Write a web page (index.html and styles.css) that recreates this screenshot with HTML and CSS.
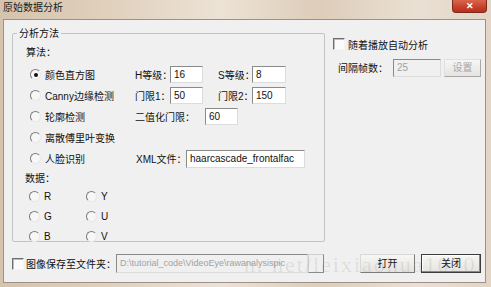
FILE: index.html
```html
<!DOCTYPE html>
<html lang="zh-CN">
<head>
    <meta charset="UTF-8">
    <title>原始数据分析</title>
    <link rel="stylesheet" href="styles.css">
</head>
<body>
    <div class="window">
        <div class="titlebar">
            <span class="title">原始数据分析</span>
            <span class="close-btn">✕</span>
        </div>

        <div class="client">
            <div class="top">
                <div class="group">
                    <div class="legend">分析方法</div>
                    <div class="group-body">
                        <div class="section-label">算法：</div>
                        <div class="algo-grid">
                            <div class="radio-row"><span class="radio checked"></span>颜色直方图</div>
                            <div class="param-row">
                                <span class="lbl w35">H等级：</span><span class="input w33">16</span>
                                <span class="lbl w34 gap15">S等级：</span><span class="input w34">8</span>
                            </div>

                            <div class="radio-row"><span class="radio"></span>Canny边缘检测</div>
                            <div class="param-row">
                                <span class="lbl w35">门限1：</span><span class="input w33">50</span>
                                <span class="lbl w34 gap15">门限2：</span><span class="input w34">150</span>
                            </div>

                            <div class="radio-row"><span class="radio"></span>轮廓检测</div>
                            <div class="param-row">
                                <span class="lbl w70">二值化门限：</span><span class="input w33">60</span>
                            </div>

                            <div class="radio-row"><span class="radio"></span>离散傅里叶变换</div>
                            <div class="param-row"></div>

                            <div class="radio-row"><span class="radio"></span>人脸识别</div>
                            <div class="param-row xml">
                                <span class="lbl w50">XML文件：</span><span class="input w119">haarcascade_frontalfac</span>
                            </div>
                        </div>

                        <div class="section-label data-label">数据：</div>
                        <div class="data-grid">
                            <div class="radio-row small"><span class="radio"></span>R</div>
                            <div class="radio-row small"><span class="radio"></span>Y</div>
                            <div class="radio-row small"><span class="radio"></span>G</div>
                            <div class="radio-row small"><span class="radio"></span>U</div>
                            <div class="radio-row small"><span class="radio"></span>B</div>
                            <div class="radio-row small"><span class="radio"></span>V</div>
                        </div>
                    </div>
                </div>

                <div class="side">
                    <div class="check-row"><span class="checkbox"></span>随着播放自动分析</div>
                    <div class="interval-row">
                        <span class="lbl w55">间隔帧数：</span>
                        <span class="input disabled w48">25</span>
                        <span class="button disabled w37">设置</span>
                    </div>
                </div>
            </div>

            <div class="bottom">
                <span class="checkbox"></span>
                <span class="lbl save-lbl">图像保存至文件夹：</span>
                <span class="input disabled path">D:\tutorial_code\VideoEye\rawanalysispic</span>
                <span class="browse"></span>
                <span class="button open">打开</span>
                <span class="button default close">关闭</span>
            </div>
        </div>

        <div class="watermark">n. net/leixiaohua1020</div>
    </div>
</body>
</html>
```

FILE: styles.css
```css
* {
    margin: 0;
    padding: 0;
    box-sizing: border-box;
}

body {
    width: 491px;
    height: 287px;
    overflow: hidden;
    font-family: "Liberation Sans", "Noto Sans CJK SC", sans-serif;
    font-size: 10px;
    color: #111;
    background: #e3d5c3;
}

.window {
    position: relative;
    width: 491px;
    height: 287px;
    background: linear-gradient(90deg, #d5c3ad 0%, #dfcfbb 20%, #ece2d5 45%, #ddcdb9 65%, #eae0d3 85%, #e2d5c5 100%);
    overflow: hidden;
}

.titlebar {
    height: 19px;
    display: flex;
    justify-content: space-between;
    align-items: flex-start;
    padding: 0 4px 0 3px;
}

.title {
    line-height: 16px;
    font-size: 10px;
    color: #1c1a18;
}

.close-btn {
    width: 35px;
    height: 13px;
    background: linear-gradient(180deg, #d9654c 0%, #c8432c 55%, #b5301c 100%);
    border: 1px solid #7d2a1e;
    border-top: none;
    border-radius: 0 0 4px 4px;
    color: #fff;
    font-size: 9px;
    font-weight: bold;
    line-height: 12px;
    text-align: center;
}

.client {
    width: 483px;
    height: 264px;
    margin-left: 3px;
    background: #f0f0f0;
    border: 1px solid #9a9288;
    padding-left: 8px;
}

.top {
    display: flex;
    height: 221px;
}

/* group box */
.group {
    width: 313px;
    height: 209px;
    margin-top: 13px;
    border: 1px solid #c3c3c3;
    border-radius: 2px;
}

.legend {
    width: max-content;
    margin: -7px 0 0 4px;
    padding: 0 2px;
    line-height: 13px;
    background: #f0f0f0;
}

.group-body {
    margin-top: 2px;
    padding-left: 13px;
}

.section-label {
    height: 22px;
    line-height: 22px;
}

.data-label {
    height: 20px;
    line-height: 20px;
    margin-left: -1px;
}

.algo-grid {
    display: grid;
    grid-template-columns: 109px 1fr;
    grid-auto-rows: 21px;
    align-items: center;
}

.data-grid {
    display: grid;
    grid-template-columns: 57px 1fr;
    grid-auto-rows: 14px;
    row-gap: 6px;
    align-items: center;
    padding-left: 3px;
}

.radio-row {
    display: flex;
    align-items: center;
    gap: 4px;
    padding-left: 4px;
    white-space: nowrap;
}

.radio-row.small {
    padding-left: 0;
}

.radio {
    width: 11px;
    height: 11px;
    border-radius: 50%;
    border: 1px solid;
    border-color: #7c7c7c #e8e8e8 #e8e8e8 #7c7c7c;
    background: #f7f7f7;
    display: flex;
    align-items: center;
    justify-content: center;
}

.radio.checked::after {
    content: "";
    width: 4px;
    height: 4px;
    border-radius: 50%;
    background: #111;
}

.param-row {
    display: flex;
    align-items: center;
    white-space: nowrap;
}

.param-row.xml {
    padding-left: 1px;
}

.lbl {
    white-space: nowrap;
}

.w35 { width: 35px; }
.w34 { width: 34px; }
.w50 { width: 50px; }
.w55 { width: 55px; }
.w70 { width: 70px; }
.gap15 { margin-left: 15px; }

.input {
    height: 17px;
    line-height: 15px;
    padding-left: 3px;
    background: #fff;
    border: 1px solid;
    border-color: #8a8a8a #dcdcdc #dcdcdc #8a8a8a;
    overflow: hidden;
    white-space: nowrap;
}

.w33 { width: 33px; }
.w48 { width: 48px; }
.w119 { width: 119px; height: 18px; line-height: 16px; }

.input.disabled {
    background: #f0f0f0;
    color: #a2a2a2;
}

.button {
    height: 19px;
    line-height: 17px;
    text-align: center;
    background: linear-gradient(180deg, #f6f6f4 0%, #e6e4e0 100%);
    border: 1px solid;
    border-color: #d8d8d8 #7c7c7c #7c7c7c #d8d8d8;
}

.button.disabled {
    color: #a6a6a6;
    border-color: #e0e0e0 #a8a8a8 #a8a8a8 #e0e0e0;
}

.w37 { width: 37px; height: 18px; line-height: 16px; }

/* right panel */
.side {
    margin-left: 8px;
    padding-top: 17px;
    display: flex;
    flex-direction: column;
}

.check-row {
    display: flex;
    align-items: center;
    gap: 3px;
    height: 14px;
}

.checkbox {
    width: 12px;
    height: 12px;
    background: #fbfbfb;
    border: 1px solid;
    border-color: #6e6e6e #f4f4f4 #f4f4f4 #6e6e6e;
    box-shadow: inset 1px 1px 0 #bdbdbd;
    flex: none;
}

.interval-row {
    display: flex;
    align-items: center;
    margin-top: 7px;
    padding-left: 5px;
    height: 19px;
}

.interval-row .input {
    height: 18px;
    margin-top: 1px;
}

.interval-row .button {
    margin-left: 3px;
}

/* bottom row */
.bottom {
    display: flex;
    align-items: center;
    height: 19px;
    margin-top: 13px;
}

.save-lbl {
    width: 90px;
    margin-left: 2px;
}

.path {
    width: 192px;
    height: 19px;
    line-height: 17px;
    font-size: 9px;
}

.browse {
    width: 16px;
    height: 19px;
    background: #f0f0f0;
    border: 1px solid;
    border-color: #d0d0d0 #8a8a8a #8a8a8a #d0d0d0;
}

.open {
    width: 55px;
    margin-left: 36px;
}

.close {
    width: 60px;
    margin-left: 6px;
}

.button.default {
    border: 1px solid #3c3c3c;
    box-shadow: inset -1px -1px 0 #8a8a8a, inset 1px 1px 0 #fff;
}

/* blog watermark laid over the dialog */
.watermark {
    position: absolute;
    left: 244px;
    top: 252px;
    font-family: "Liberation Serif", serif;
    font-size: 22px;
    letter-spacing: 2px;
    color: rgba(120, 120, 120, 0.16);
    white-space: nowrap;
    pointer-events: none;
}
```
